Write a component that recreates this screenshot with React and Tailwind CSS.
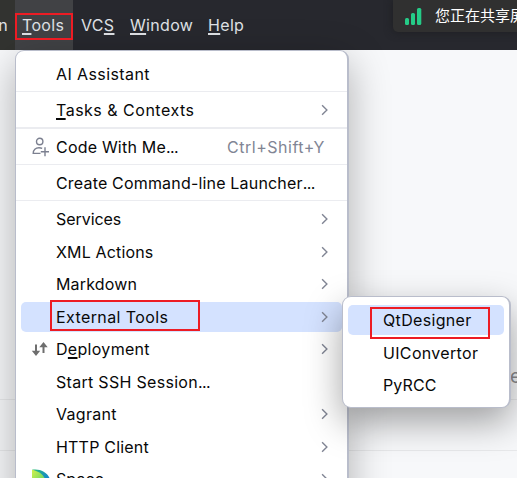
import React from "react";

function Chevron() {
  return (
    <svg width="8" height="12" viewBox="0 0 8 12" fill="none" className="shrink-0">
      <path d="M1.1 1.2 L5.9 6 L1.1 10.8" stroke="#818594" strokeWidth="1.4" />
    </svg>
  );
}

function PersonPlus() {
  return (
    <svg width="18" height="20" viewBox="0 0 18 20" fill="none" stroke="#7c8090" strokeWidth="1.4">
      <circle cx="8.7" cy="4.5" r="3.2" />
      <path d="M9.5 16.4H2.2C2.2 12.7 4.6 10.8 8 10.8C9.3 10.8 10.3 11 11.2 11.4" />
      <path d="M14 10.3v9M9.8 14.8h8.2" />
    </svg>
  );
}

function UpDown() {
  return (
    <svg width="18" height="16" viewBox="0 0 18 16" fill="none" stroke="#6e6e6e" strokeWidth="2">
      <path d="M5 3.5v8M12.5 4v8" />
      <path d="M.8 9.8 5 15l4.2-5.2zM8.3 6.2 12.5 1 16.7 6.2z" fill="#6e6e6e" stroke="none" />
    </svg>
  );
}

function SpaceLogo() {
  return (
    <svg width="20" height="20" viewBox="0 0 20 20">
      <defs>
        <linearGradient id="sp1" x1="0" y1="0" x2="1" y2="1">
          <stop offset="0" stopColor="#d2f04c" />
          <stop offset="1" stopColor="#48cf70" />
        </linearGradient>
        <linearGradient id="sp2" x1="0" y1="0" x2="1" y2="1">
          <stop offset="0" stopColor="#27bd78" />
          <stop offset="0.6" stopColor="#168cc4" />
          <stop offset="1" stopColor="#176ae0" />
        </linearGradient>
      </defs>
      <path d="M1 .8C9-.5 16 3 19 10L10 19Z" fill="url(#sp2)" />
      <path d="M1 .8C7 2 12 5 14 10L1 19Z" fill="url(#sp1)" />
    </svg>
  );
}

function Item({ icon, children, arrow, shortcut, height = "h-[32.5px]", track = "tracking-[0.3px]", selected }) {
  return (
    <div className={`flex shrink-0 items-center px-[5px] ${height}`}>
      <div className={`flex h-[30px] flex-1 items-center rounded-[5px] ${selected ? "bg-[#d4e2ff]" : ""}`}>
        <div className="flex w-[35px] shrink-0 justify-start pl-[10px]">{icon}</div>
        <div className={`flex-1 whitespace-nowrap ${track}`}>{children}</div>
        {shortcut && <span className="mr-[17px] tracking-[0.52px] text-[#818594]">{shortcut}</span>}
        {arrow && <div className="mr-[13px] flex">
          <Chevron />
        </div>}
      </div>
    </div>
  );
}

function Mn({ children }) {
  return <span className="underline decoration-[1.5px] underline-offset-[2px] [text-decoration-skip-ink:none]">{children}</span>;
}

export default function App() {
  return (
    <div className="relative h-[478px] w-[517px] overflow-hidden bg-[#f7f8fa] font-['Inter','Noto_Sans_CJK_SC',sans-serif] text-[16px] leading-[20px] font-[385] tracking-[0.33px] text-[#080808]">
      <header className="flex h-[50px] bg-[#27282e] text-[#dfe1e5]">
        <div className="flex w-[15px] justify-end bg-[#323330] pt-[15px] pr-[7px]">n</div>
        <div className="w-[58px] bg-[#414245] pt-[15px] pl-[7px]"><Mn>T</Mn>ools</div>
        <div className="w-[48px] pt-[15px] pl-[8px]">VC<Mn>S</Mn></div>
        <div className="w-[79px] pt-[15px] pl-[9px]"><Mn>W</Mn>indow</div>
        <div className="w-[60px] pt-[15px] pl-[8px]"><Mn>H</Mn>elp</div>
        <div className="ml-auto flex h-[32px] w-[124px] overflow-hidden rounded-bl-[5px] bg-[#303030] pl-[12px] shadow-[0_0_8px_#1d1e21]">
          <svg width="17" height="18" viewBox="0 0 17 18" className="mt-[8px] shrink-0" fill="#25cb87">
            <rect x="0" y="10" width="4" height="7" rx="1.5" />
            <rect x="6" y="5" width="4" height="12" rx="1.5" />
            <rect x="12" y="0" width="4.3" height="17" rx="1.5" />
          </svg>
          <span className="mt-[5px] ml-[13px] whitespace-nowrap font-['Noto_Sans_CJK_SC',sans-serif] text-[15px] tracking-normal text-white">您正在共享屏幕</span>
        </div>
      </header>
      <main className="flex h-[428px] flex-col text-[#8b8c90]">
        <div className="h-[350px] border-b border-[#e8e9eb] pt-[317px] pl-[510px] text-[19px]">e</div>
        <div className="h-[51px] border-b border-[#e8e9eb]" />
      </main>

      <div className="absolute top-[50px] left-[15px] flex h-[460px] w-[334px] flex-col rounded-[9px] border border-r-2 border-[#b9bdcb] bg-white pt-[7px] shadow-[0_12px_40px_rgba(0,0,0,0.3)]">
        <Item height="h-[33px] pb-px" track="tracking-[0.4px]">AI Assistant</Item>
        <div className="h-px shrink-0 bg-[#ebecf0]" />
        <Item height="h-[35px]" arrow track="tracking-[0.5px]"><Mn>T</Mn>asks &amp; Contexts</Item>
        <div className="h-[2px] shrink-0 bg-[#ebecf0]" />
        <Item height="h-[35px]" icon={<PersonPlus />} shortcut="Ctrl+Shift+Y" track="tracking-[0.2px]">Code With Me<span className="tracking-[-0.6px]">...</span></Item>
        <div className="h-px shrink-0 bg-[#ebecf0]" />
        <Item height="h-[35px]" track="tracking-[0.18px]">Create Command-line Launcher<span className="tracking-[-0.6px]">...</span></Item>
        <div className="mb-[2px] h-px shrink-0 bg-[#ebecf0]" />
        <Item arrow track="tracking-[-0.05px]">Services</Item>
        <Item arrow track="tracking-[0.15px]">XML Actions</Item>
        <Item arrow track="tracking-[0.15px]">Markdown</Item>
        <Item arrow selected track="tracking-[0.4px]">External Tools</Item>
        <Item arrow icon={<UpDown />}>D<Mn>e</Mn>ployment</Item>
        <Item track="tracking-[0.3px]">Start SSH Session<span className="tracking-[-0.6px]">...</span></Item>
        <Item arrow>Vagrant</Item>
        <Item arrow track="tracking-[0.2px]">HTTP Client</Item>
        <Item arrow icon={<SpaceLogo />} track="tracking-[0.1px]">Space</Item>
      </div>

      <div className="absolute top-[296px] left-[342px] flex h-[112px] w-[169px] flex-col rounded-[9px] border border-r-2 border-[#b9bdcb] bg-white pt-[8px] pr-[5px] pl-[5px] shadow-[0_14px_36px_rgba(0,0,0,0.36)]">
        <div className="flex h-[30px] items-center rounded-[5px] bg-[#d4e2ff] pl-[35px]">QtDesigner</div>
        <div className="mt-[2px] flex h-[33px] items-center pb-[2px] pl-[35px]">UIConvertor</div>
        <div className="flex h-[32px] items-center pb-[2px] pl-[35px] tracking-[0.1px]">PyRCC</div>
      </div>

      <div className="absolute top-[13px] left-[15px] h-[27px] w-[58px] border-2 border-[#ed1c24]" />
      <div className="absolute top-[300px] left-[50px] h-[31px] w-[150px] border-2 border-[#ed1c24]" />
      <div className="absolute top-[307px] left-[370px] h-[32px] w-[120px] border-2 border-[#ed1c24]" />
    </div>
  );
}
